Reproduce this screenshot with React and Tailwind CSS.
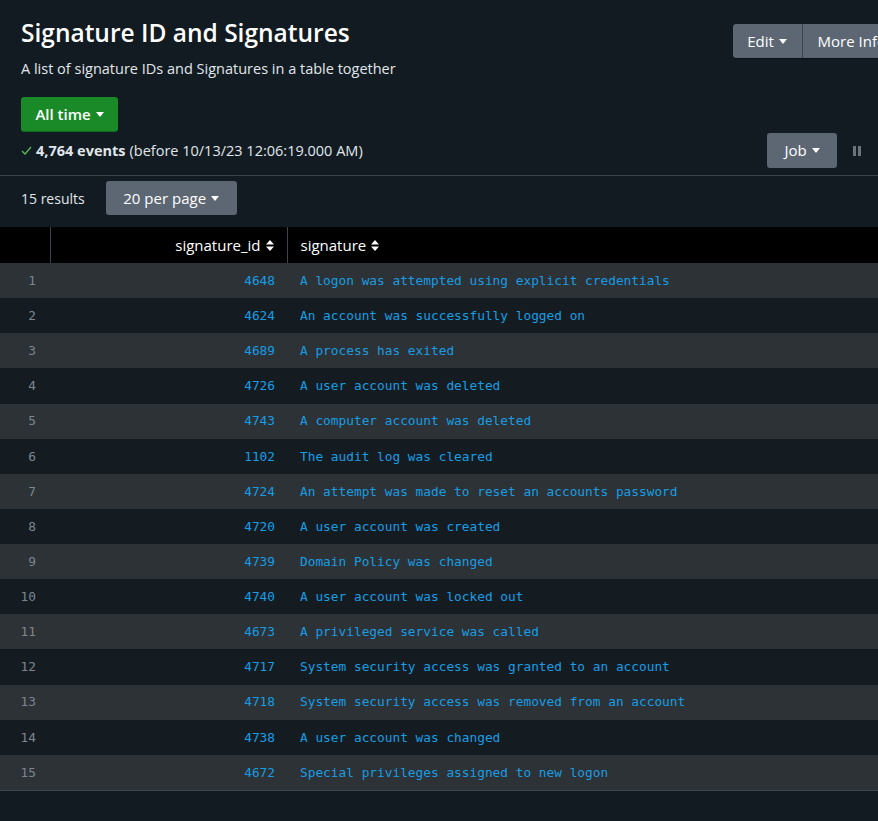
import React from 'react';

const rows = [
  ['4648', 'A logon was attempted using explicit credentials'],
  ['4624', 'An account was successfully logged on'],
  ['4689', 'A process has exited'],
  ['4726', 'A user account was deleted'],
  ['4743', 'A computer account was deleted'],
  ['1102', 'The audit log was cleared'],
  ['4724', 'An attempt was made to reset an accounts password'],
  ['4720', 'A user account was created'],
  ['4739', 'Domain Policy was changed'],
  ['4740', 'A user account was locked out'],
  ['4673', 'A privileged service was called'],
  ['4717', 'System security access was granted to an account'],
  ['4718', 'System security access was removed from an account'],
  ['4738', 'A user account was changed'],
  ['4672', 'Special privileges assigned to new logon'],
];

function Caret() {
  return (
    <svg width="8" height="5" viewBox="0 0 8 5" className="ml-[5px] inline-block">
      <path d="M0 0h8L4 5z" fill="currentColor" />
    </svg>
  );
}

function Sort() {
  return (
    <svg width="8" height="11" viewBox="0 0 8 11" className="ml-[5px] inline-block">
      <path d="M4 0l4 4.5H0z M4 11L0 6.5h8z" fill="currentColor" />
    </svg>
  );
}

export default function App() {
  return (
    <div className="min-h-[821px] overflow-hidden bg-[#111b21] text-[#e1e6eb] font-['Open_Sans',sans-serif]">
      <div className="border-b border-[#3a434b] px-[21px] pb-[7px]">
        <div className="flex justify-between">
          <div>
            <h1 className="pt-[16px] text-[24.5px] leading-[34px] font-semibold text-white">Signature ID and Signatures</h1>
            <p className="mt-[9px] text-[14.5px] leading-[20px] text-[#e1e6eb]">A list of signature IDs and Signatures in a table together</p>
          </div>
          <div className="mt-[24px] mr-[-44px] flex h-[34px] shrink-0 overflow-hidden rounded-l-[3px] bg-[#5c6773] text-[15px] text-white shadow-[0_1px_1px_rgba(0,0,0,0.3)]">
            <button className="flex w-[70px] items-center justify-center border-r border-[#3c444d]">Edit<Caret /></button>
            <button className="flex items-center pl-[15px] pr-[15px] whitespace-nowrap">More Info</button>
          </div>
        </div>
        <button className="mt-[18px] flex h-[34px] w-[97px] items-center justify-center rounded-[3px] bg-[#1a8a29] text-[15px] font-semibold text-white shadow-[0_1px_0_#126a1e]">
          All time<Caret />
        </button>
        <div className="mt-[2px] flex items-center justify-between">
          <div className="flex items-center text-[14.5px] leading-[20px]">
            <svg width="11" height="9" viewBox="0 0 11 9" className="mr-[4px]">
              <path d="M1 5l3 3 6-7" stroke="#5cb85c" strokeWidth="1.3" fill="none" />
            </svg>
            <span className="font-bold text-[#e1e6eb]">4,764 events</span>
            <span className="ml-[4px]">(before 10/13/23 12:06:19.000 AM)</span>
          </div>
          <div className="flex items-center">
            <button className="flex h-[35px] w-[70px] items-center justify-center rounded-[3px] bg-[#5c6773] text-[15px] text-white">
              Job<Caret />
            </button>
            <svg width="8" height="10" viewBox="0 0 8 10" className="ml-[16px] mr-[-4px]">
              <rect x="0" y="0" width="3" height="10" fill="#6b747c" />
              <rect x="5" y="0" width="3" height="10" fill="#6b747c" />
            </svg>
          </div>
        </div>
      </div>

      <div className="flex items-center px-[21px] pt-[5px] pb-[12px]">
        <span className="text-[14px] text-[#e1e6eb]">15 results</span>
        <button className="ml-[21px] flex h-[34px] w-[131px] items-center justify-center rounded-[3px] bg-[#5c6773] text-[15px] text-white">
          20 per page<Caret />
        </button>
      </div>

      <table className="w-full border-collapse">
        <thead>
          <tr className="h-[36px] bg-black text-[15px] text-white">
            <th className="w-[50px] border-r border-[#3c444d]"></th>
            <th className="w-[237px] border-r border-[#3c444d] pr-[13px] text-right font-normal">
              <span className="inline-flex items-center">signature_id<Sort /></span>
            </th>
            <th className="pl-[13px] text-left font-normal">
              <span className="inline-flex items-center">signature<Sort /></span>
            </th>
          </tr>
        </thead>
        <tbody className="font-['DejaVu_Sans_Mono',monospace] text-[12.8px]">
          {rows.map(([id, sig], i) => (
            <tr key={id + i} className={`h-[35.13px] ${i % 2 === 0 ? 'bg-[#2c3235]' : 'bg-[#141c22]'}`}>
              <td className="pr-[14px] text-right text-[#7d868e]">{i + 1}</td>
              <td className="pr-[12px] text-right text-[#1b9ce2]">{id}</td>
              <td className="pl-[13px] text-left text-[#1b9ce2]">{sig}</td>
            </tr>
          ))}
        </tbody>
      </table>
      <div className="border-t border-[#3c474f]"></div>
    </div>
  );
}
